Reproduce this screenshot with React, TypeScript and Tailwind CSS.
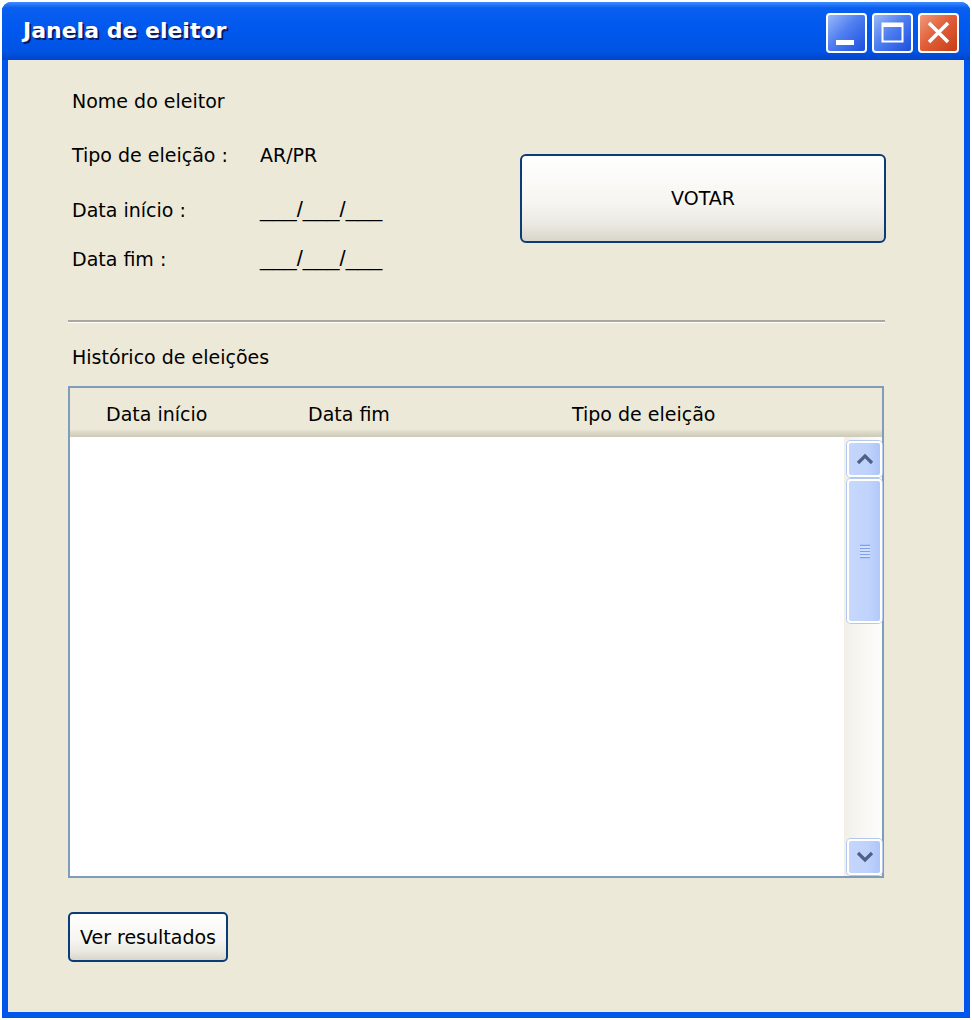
import React from "react";

function CaptionButton({ kind }: { kind: "min" | "max" | "close" }) {
  const bg =
    kind === "close"
      ? "bg-[linear-gradient(135deg,#f09a7c_0%,#e2603a_45%,#c83d14_100%)]"
      : "bg-[linear-gradient(135deg,#9bb9f8_0%,#4f7ff0_45%,#1c4fe0_100%)]";
  return (
    <div
      className={`w-[41px] h-[40px] rounded-[4px] border-2 border-white flex items-center justify-center ${bg}`}
    >
      {kind === "min" && (
        <svg width="37" height="36" viewBox="0 0 37 36">
          <rect x="8" y="25" width="18" height="5" fill="#fff" />
        </svg>
      )}
      {kind === "max" && (
        <svg width="37" height="36" viewBox="0 0 37 36">
          <rect x="8.5" y="8.5" width="20" height="18" fill="none" stroke="#fff" strokeWidth="2" />
          <rect x="8" y="8" width="21" height="4" fill="#fff" />
        </svg>
      )}
      {kind === "close" && (
        <svg width="37" height="36" viewBox="0 0 37 36">
          <path d="M9 8 L28 27 M28 8 L9 27" stroke="#fff" strokeWidth="3.5" />
        </svg>
      )}
    </div>
  );
}

function ScrollArrow({ dir }: { dir: "up" | "down" }) {
  return (
    <div className="w-[35px] h-[36px] rounded-[4px] border-2 border-white shadow-[0_0_0_1px_#b4c7ee] bg-[linear-gradient(90deg,#c4d6fc_0%,#bfd2fb_60%,#aec6f8_100%)] flex items-center justify-center">
      <svg width="18" height="12" viewBox="0 0 18 12">
        {dir === "up" ? (
          <path d="M2 10 L9 3 L16 10" fill="none" stroke="#4d6185" strokeWidth="3.2" />
        ) : (
          <path d="M2 2 L9 9 L16 2" fill="none" stroke="#4d6185" strokeWidth="3.2" />
        )}
      </svg>
    </div>
  );
}

function DateBlank() {
  return (
    <span className="font-['Liberation_Sans',sans-serif] text-[22px] leading-[24px]">
      ___/___/___
    </span>
  );
}

export default function App() {
  return (
    <div className="w-[972px] h-[1020px] bg-white pt-[2px] pl-[2px] font-['DejaVu_Sans',sans-serif] text-black">
      <div className="w-[968px] h-[1016px] rounded-t-[9px] bg-[#0055ea] flex flex-col overflow-hidden">
        {/* Title bar */}
        <div className="h-[58px] shrink-0 flex items-center pl-[21px] pr-[11px] bg-[linear-gradient(to_bottom,#3d8dff_0%,#0a5ff0_10%,#0058ee_45%,#0054e4_85%,#0043cc_100%)]">
          <span className="text-white font-bold text-[22px] leading-none [text-shadow:2px_2px_0_#0a1a6a]">
            Janela de eleitor
          </span>
          <div className="ml-auto self-start mt-[11px] flex gap-[5px]">
            <CaptionButton kind="min" />
            <CaptionButton kind="max" />
            <CaptionButton kind="close" />
          </div>
        </div>

        {/* Body */}
        <div className="flex-1 mx-[6px] mb-[6px] bg-[#ece9d8] flex flex-col pl-[60px] pt-[29px] text-[19px]">
          <div className="flex">
            <div className="w-[452px] pl-[4px] flex flex-col">
              <div className="h-[24px] leading-[24px]">Nome do eleitor</div>
              <div className="h-[24px] leading-[24px] mt-[30px] flex">
                <span className="w-[188px]">Tipo de eleição :</span>
                <span>AR/PR</span>
              </div>
              <div className="h-[24px] leading-[24px] mt-[31px] flex">
                <span className="w-[188px]">Data início :</span>
                <DateBlank />
              </div>
              <div className="h-[24px] leading-[24px] mt-[25px] flex">
                <span className="w-[188px]">Data fim :</span>
                <DateBlank />
              </div>
            </div>
            <button className="mt-[65px] w-[366px] h-[89px] rounded-[6px] border-2 border-[#0a3d78] bg-[linear-gradient(to_bottom,#ffffff_0%,#f6f5f1_55%,#ebe9e2_80%,#d9d5ca_100%)] text-[19px]">
              VOTAR
            </button>
          </div>

          <div className="mt-[49px] w-[817px]">
            <div className="h-[2px] bg-[#aca899]" />
            <div className="h-px bg-white" />
          </div>

          <div className="mt-[22px] h-[24px] leading-[24px] pl-[4px]">Histórico de eleições</div>

          {/* Table */}
          <div className="mt-[17px] w-[816px] h-[492px] border-2 border-[#7f9db9] flex flex-col bg-white">
            <div className="h-[49px] shrink-0 flex items-center pt-[3px] bg-[linear-gradient(to_bottom,#ece9d8_0%,#ece9d8_84%,#dedac9_90%,#cdc9b6_100%)]">
              <span className="ml-[36px] w-[202px]">Data início</span>
              <span className="w-[264px]">Data fim</span>
              <span>Tipo de eleição</span>
            </div>
            <div className="flex-1 flex">
              <div className="flex-1" />
              <div className="w-[38px] flex flex-col items-end pt-[4px] pb-[1px] bg-[linear-gradient(90deg,#f1efe8_0%,#f8f7f3_50%,#fdfdfc_100%)]">
                <ScrollArrow dir="up" />
                <div className="mt-[2px] w-[35px] h-[144px] rounded-[4px] border-2 border-white shadow-[0_0_0_1px_#b4c7ee] bg-[linear-gradient(90deg,#c6d8fd_0%,#c0d3fc_65%,#b2c9f9_100%)] flex items-center justify-center">
                  <svg width="16" height="16" viewBox="0 0 16 16">
                    <path d="M3 2.5 H13 M3 5.5 H13 M3 8.5 H13 M3 11.5 H13 M3 14.5 H13" stroke="#7fa0ef" strokeWidth="1.6" />
                    <path d="M3 4 H13 M3 7 H13 M3 10 H13 M3 13 H13" stroke="#f2f6ff" strokeWidth="1.2" />
                  </svg>
                </div>
                <div className="flex-1" />
                <ScrollArrow dir="down" />
              </div>
            </div>
          </div>

          <button className="mt-[34px] w-[160px] h-[50px] rounded-[5px] border-2 border-[#0a3d78] bg-[linear-gradient(to_bottom,#ffffff_0%,#f6f5f1_55%,#ebe9e2_80%,#d9d5ca_100%)] text-[19px]">
            Ver resultados
          </button>
        </div>
      </div>
    </div>
  );
}
